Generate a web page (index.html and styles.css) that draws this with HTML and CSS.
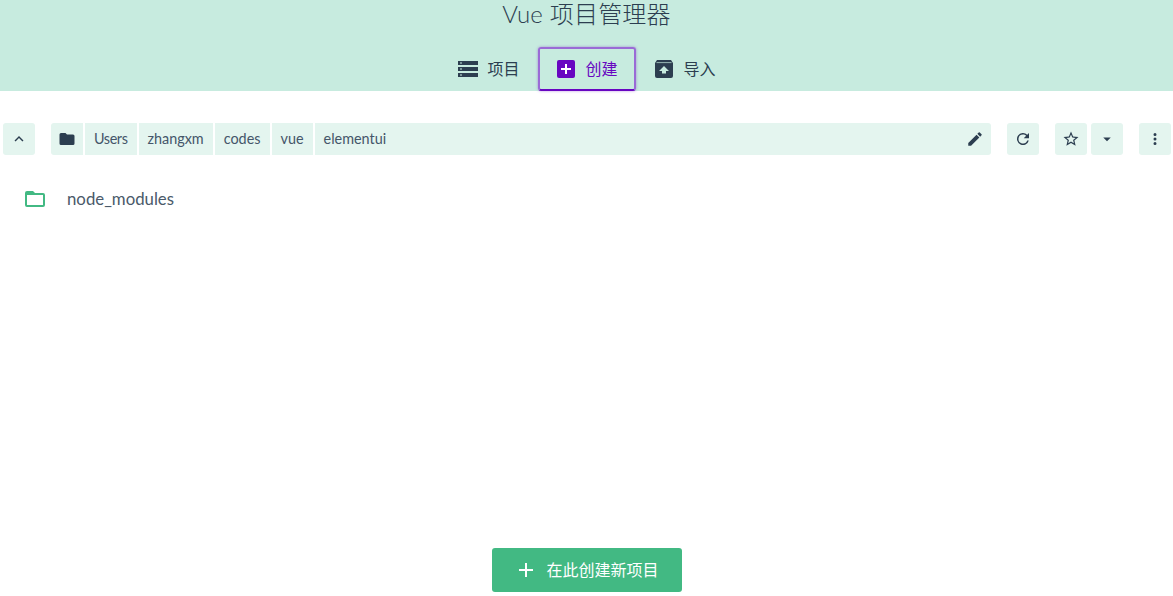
FILE: index.html
```html
<!DOCTYPE html>
<html lang="zh">
<head>
<meta charset="utf-8">
<title>Vue 项目管理器</title>
<link rel="stylesheet" href="styles.css">
</head>
<body>
<div class="app">
  <header class="header">
    <h1 class="title">Vue 项目管理器</h1>
    <nav class="tabs">
      <a class="tab">
        <svg class="tab-icon" viewBox="0 0 20 16"><path d="M0 0h20v4H0zM0 6h20v4H0zM0 12h20v4H0z" fill="#2c3e50"/><path d="M2 1.4h2v1.2H2zM2 7.4h2v1.2H2zM2 13.4h2v1.2H2z" fill="#c7ebdf"/></svg>
        <span class="tab-label">项目</span>
      </a>
      <a class="tab tab-active">
        <svg class="tab-icon" viewBox="0 0 18 18"><rect width="18" height="18" rx="2" fill="#6806c1"/><path d="M8 4h2v4h4v2h-4v4H8v-4H4V8h4z" fill="#fff"/></svg>
        <span class="tab-label">创建</span>
      </a>
      <a class="tab">
        <svg class="tab-icon" viewBox="0 0 18 18"><path d="M2 0h14l2 3v13a2 2 0 0 1-2 2H2a2 2 0 0 1-2-2V3z" fill="#2c3e50"/><path d="M1.5 2.6h15" stroke="#c7ebdf" stroke-width=".7"/><path d="M9 6l5 5h-3v2.5H7V11H4z" fill="#c7ebdf"/></svg>
        <span class="tab-label">导入</span>
      </a>
    </nav>
  </header>

  <div class="toolbar">
    <button class="btn btn-up">
      <svg class="icon" viewBox="0 0 24 24"><path d="M7.4 15.4 12 10.8l4.6 4.6L18 14l-6-6-6 6z"/></svg>
    </button>
    <div class="path">
      <button class="btn crumb-icon">
        <svg class="icon" viewBox="0 0 24 24"><path d="M10 4H4a2 2 0 0 0-2 2v12a2 2 0 0 0 2 2h16a2 2 0 0 0 2-2V8a2 2 0 0 0-2-2h-8z"/></svg>
      </button>
      <span class="crumb crumb-users">Users</span>
      <span class="crumb">zhangxm</span>
      <span class="crumb">codes</span>
      <span class="crumb">vue</span>
      <span class="crumb crumb-last">elementui
        <svg class="icon edit" viewBox="0 0 24 24"><path d="M3 17.25V21h3.75L17.81 9.94l-3.75-3.75zM20.71 7.04a1 1 0 0 0 0-1.41l-2.34-2.34a1 1 0 0 0-1.41 0l-1.83 1.83 3.75 3.75z"/></svg>
      </span>
    </div>
    <button class="btn btn-refresh">
      <svg class="icon" viewBox="0 0 24 24"><path d="M17.65 6.35A8 8 0 1 0 19.73 14h-2.08A6 6 0 1 1 12 6c1.66 0 3.14.69 4.22 1.78L13 11h7V4z"/></svg>
    </button>
    <button class="btn btn-star">
      <svg class="icon" viewBox="0 0 24 24"><path d="M22 9.24l-7.19-.62L12 2 9.19 8.63 2 9.24l5.46 4.73L5.82 21 12 17.27 18.18 21l-1.63-7.03zM12 15.4l-3.76 2.27 1-4.28-3.32-2.88 4.38-.38L12 6.1l1.71 4.04 4.38.38-3.32 2.88 1 4.28z"/></svg>
    </button>
    <button class="btn btn-caret">
      <svg class="icon" viewBox="0 0 24 24"><path d="M7 10l5 5 5-5z"/></svg>
    </button>
    <button class="btn btn-more">
      <svg class="icon" viewBox="0 0 24 24"><path d="M12 8a2 2 0 1 0 0-4 2 2 0 0 0 0 4zm0 2a2 2 0 1 0 0 4 2 2 0 0 0 0-4zm0 6a2 2 0 1 0 0 4 2 2 0 0 0 0-4z"/></svg>
    </button>
  </div>

  <main class="files">
    <div class="file">
      <svg class="file-icon" viewBox="0 0 24 24"><path d="M20 6h-8l-2-2H4a2 2 0 0 0-2 2v12a2 2 0 0 0 2 2h16a2 2 0 0 0 2-2V8a2 2 0 0 0-2-2zm0 12H4V8h16z"/></svg>
      <span class="file-name">node_modules</span>
    </div>
  </main>

  <footer class="footer">
    <button class="create">
      <svg class="create-icon" viewBox="0 0 24 24"><path d="M19 13h-6v6h-2v-6H5v-2h6V5h2v6h6z"/></svg>
      <span class="create-label">在此创建新项目</span>
    </button>
  </footer>
</div>
</body>
</html>
```
FILE: styles.css
```css
* { box-sizing: border-box; }
html, body { margin: 0; height: 100%; }
body {
  font-family: Lato, "Noto Sans CJK SC", sans-serif;
  color: #2c3e50;
  background: #fff;
  overflow: hidden;
}
.app { height: 596px; display: flex; flex-direction: column; }

.header {
  height: 91px;
  background: #c7ebdf;
  display: flex;
  flex-direction: column;
  align-items: center;
}
.title {
  margin: 0;
  height: 47px;
  font-size: 24px;
  line-height: 28px;
  font-weight: 300;
  letter-spacing: .2px;
  color: #2c3e50;
}
.tabs { display: flex; align-items: stretch; height: 44px; }
.tab {
  width: 98px;
  display: flex;
  align-items: center;
  justify-content: center;
  gap: 10px;
  font-size: 16px;
  border: 2px solid transparent;
  border-radius: 3px;
  color: #2c3e50;
}
.tab-label { padding-bottom: 3px; }
.tab-icon { width: 20px; height: 18px; flex: none; margin-left: 1px; margin-right: -1px; }
.tab-active {
  color: #6806c1;
  border-color: #9a6bd6;
  border-bottom-color: #6806c1;
  box-shadow: 0 0 3px rgba(104, 6, 193, .4);
}

.toolbar {
  margin-top: 32px;
  padding: 0 2px 0 3px;
  display: flex;
  align-items: center;
  height: 32px;
}
.btn {
  width: 32px;
  height: 32px;
  padding: 0;
  border: 0;
  border-radius: 3px;
  background: #e4f5ef;
  display: flex;
  align-items: center;
  justify-content: center;
  flex: none;
}
.icon { width: 18px; height: 18px; fill: #2c3e50; display: block; }
.btn-up { margin-right: 16px; }
.path { flex: 1; display: flex; gap: 2px; height: 32px; min-width: 0; }
.crumb-icon { border-radius: 3px 0 0 3px; }
.crumb {
  background: #e4f5ef;
  display: flex;
  align-items: center;
  padding: 0 9px 2px;
  font-size: 14.4px;
  color: #45566a;
}
.crumb-users { letter-spacing: -.4px; }
.crumb-last {
  flex: 1;
  justify-content: space-between;
  padding-right: 7px;
  border-radius: 0 3px 3px 0;
}
.edit { margin-top: 2px; }
.btn-refresh { margin-left: 16px; }
.btn-star { margin-left: 16px; }
.btn-caret { margin-left: 4px; }
.btn-more { margin-left: 16px; }

.files { flex: 1; padding-top: 28px; }
.file {
  display: flex;
  align-items: center;
  height: 32px;
  padding-left: 23px;
  font-size: 16.8px;
  color: #4a5a6a;
}
.file-name { padding-bottom: 2px; }
.file-icon { width: 24px; height: 24px; fill: #42b983; margin-right: 20px; }

.footer { display: flex; justify-content: center; padding-bottom: 4px; }
.create {
  width: 190px;
  height: 44px;
  border: 0;
  border-radius: 3px;
  background: #42b983;
  color: #fff;
  display: flex;
  align-items: center;
  justify-content: center;
  gap: 8px;
  font-family: inherit;
  font-size: 16px;
  padding: 0;
}
.create-label { padding-bottom: 3px; }
.create-icon { width: 24px; height: 24px; fill: #fff; }
```
